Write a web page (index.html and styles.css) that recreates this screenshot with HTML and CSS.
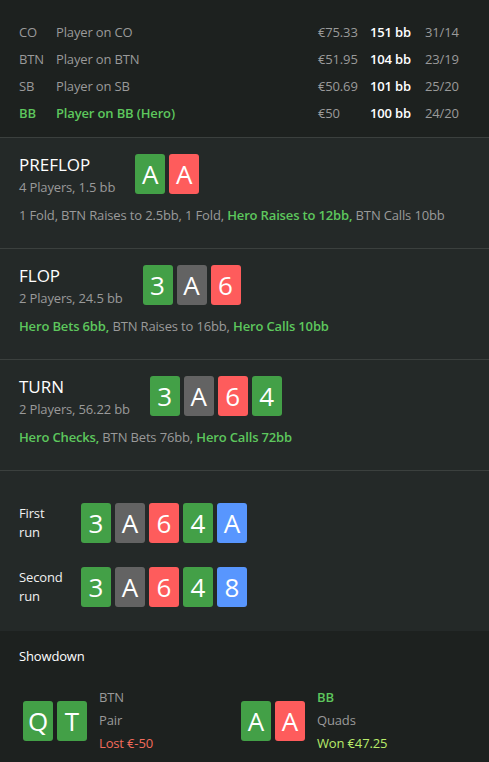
FILE: index.html
```html
<!DOCTYPE html>
<html>
<head>
<meta charset="utf-8">
<link rel="stylesheet" href="styles.css">
</head>
<body>
<div class="app">
  <div class="players">
    <div class="prow"><span class="pos">CO</span><span class="pname">Player on CO</span><span class="money">€75.33</span><span class="bb">151 bb</span><span class="ratio">31/14</span></div>
    <div class="prow"><span class="pos">BTN</span><span class="pname">Player on BTN</span><span class="money">€51.95</span><span class="bb">104 bb</span><span class="ratio">23/19</span></div>
    <div class="prow"><span class="pos">SB</span><span class="pname">Player on SB</span><span class="money">€50.69</span><span class="bb">101 bb</span><span class="ratio">25/20</span></div>
    <div class="prow hero"><span class="pos">BB</span><span class="pname">Player on BB (Hero)</span><span class="money">€50</span><span class="bb">100 bb</span><span class="ratio">24/20</span></div>
  </div>

  <div class="street">
    <div class="street-head">
      <div class="street-info">
        <div class="street-title">PREFLOP</div>
        <div class="street-sub">4 Players, 1.5 bb</div>
      </div>
      <div class="cards"><span class="card g">A</span><span class="card r">A</span></div>
    </div>
    <div class="actions">1 Fold, BTN Raises to 2.5bb, 1 Fold, <b class="hl">Hero Raises to 12bb,</b> BTN Calls 10bb</div>
  </div>

  <div class="street">
    <div class="street-head">
      <div class="street-info">
        <div class="street-title">FLOP</div>
        <div class="street-sub">2 Players, 24.5 bb</div>
      </div>
      <div class="cards"><span class="card g">3</span><span class="card k">A</span><span class="card r">6</span></div>
    </div>
    <div class="actions"><b class="hl">Hero Bets 6bb,</b> BTN Raises to 16bb, <b class="hl">Hero Calls 10bb</b></div>
  </div>

  <div class="street">
    <div class="street-head">
      <div class="street-info">
        <div class="street-title">TURN</div>
        <div class="street-sub">2 Players, 56.22 bb</div>
      </div>
      <div class="cards"><span class="card g">3</span><span class="card k">A</span><span class="card r">6</span><span class="card g">4</span></div>
    </div>
    <div class="actions"><b class="hl">Hero Checks,</b> BTN Bets 76bb, <b class="hl">Hero Calls 72bb</b></div>
  </div>

  <div class="runs">
    <div class="run">
      <div class="run-label">First<br>run</div>
      <div class="cards"><span class="card g">3</span><span class="card k">A</span><span class="card r">6</span><span class="card g">4</span><span class="card b">A</span></div>
    </div>
    <div class="run">
      <div class="run-label">Second<br>run</div>
      <div class="cards"><span class="card g">3</span><span class="card k">A</span><span class="card r">6</span><span class="card g">4</span><span class="card b">8</span></div>
    </div>
  </div>

  <div class="showdown">
    <div class="sd-title">Showdown</div>
    <div class="sd-hands">
      <div class="sd-hand">
        <div class="cards"><span class="card g">Q</span><span class="card g">T</span></div>
        <div class="sd-info">
          <div class="sd-pos">BTN</div>
          <div class="sd-rank">Pair</div>
          <div class="sd-lost">Lost €-50</div>
        </div>
      </div>
      <div class="sd-hand">
        <div class="cards"><span class="card g">A</span><span class="card r">A</span></div>
        <div class="sd-info">
          <div class="sd-pos hero-pos">BB</div>
          <div class="sd-rank">Quads</div>
          <div class="sd-won">Won €47.25</div>
        </div>
      </div>
    </div>
  </div>
</div>
</body>
</html>
```

FILE: styles.css
```css
* { box-sizing: border-box; }
html, body {
  margin: 0;
  padding: 0;
  background: #1d211f;
}
body {
  font-family: "Open Sans", "Noto Sans", sans-serif;
  font-size: 13px;
  letter-spacing: -0.15px;
  color: #9a9a9a;
  width: 489px;
  height: 762px;
  overflow: hidden;
}
.app {
  display: flex;
  flex-direction: column;
}
.players {
  background: #1d211f;
  padding: 18px 19px 11px 19px;
  border-bottom: 1px solid #3b403e;
}
.prow {
  display: grid;
  grid-template-columns: 37px 1fr 52px 55px 45px;
  height: 27px;
  align-items: center;
  color: #9a9a9a;
}
.prow .bb { color: #ffffff; font-weight: 600; }
.prow.hero .pos, .prow.hero .pname { color: #5dc75d; font-weight: 600; }

.street {
  background: #242928;
  padding: 16px 19px 0 19px;
  height: 111px;
  border-bottom: 1px solid #3b403e;
}
.street-head {
  display: flex;
  align-items: flex-start;
  gap: 20px;
}
.street-title {
  color: #ffffff;
  font-size: 17px;
  line-height: 22px;
  letter-spacing: 0;
}
.street-sub {
  line-height: 22px;
  color: #9a9a9a;
}
.cards {
  display: flex;
  gap: 4px;
}
.card {
  width: 30px;
  height: 40px;
  border-radius: 3px;
  color: #ffffff;
  font-size: 26px;
  letter-spacing: 0;
  display: flex;
  align-items: center;
  justify-content: center;
  line-height: 1;
}
.card.g { background: #43a047; }
.card.r { background: #fe5c5c; }
.card.k { background: #636363; }
.card.b { background: #5896fe; }
.actions {
  margin-top: 7px;
  line-height: 20px;
  white-space: nowrap;
}
.hl { color: #5dc75d; font-weight: 600; }

.runs {
  background: #242928;
  padding: 32px 19px 24px 19px;
  display: flex;
  flex-direction: column;
  gap: 24px;
}
.run {
  display: flex;
  align-items: center;
}
.run-label {
  width: 62px;
  color: #f0f0f0;
  line-height: 19px;
}

.showdown {
  background: #1d211f;
  padding: 15px 19px 0 19px;
  flex: 1;
}
.sd-title {
  color: #ffffff;
  line-height: 20px;
}
.sd-hands {
  display: grid;
  grid-template-columns: 218px 218px;
  padding-left: 4px;
  margin-top: 20px;
}
.sd-hand {
  display: flex;
  align-items: center;
  gap: 12px;
}
.sd-info {
  display: flex;
  flex-direction: column;
}
.sd-info div { line-height: 23px; }
.sd-pos { color: #9a9a9a; }
.hero-pos { color: #5dc75d; font-weight: 600; }
.sd-rank { color: #9a9a9a; }
.sd-lost { color: #f26b5b; }
.sd-won { color: #b8ec6a; }
```
